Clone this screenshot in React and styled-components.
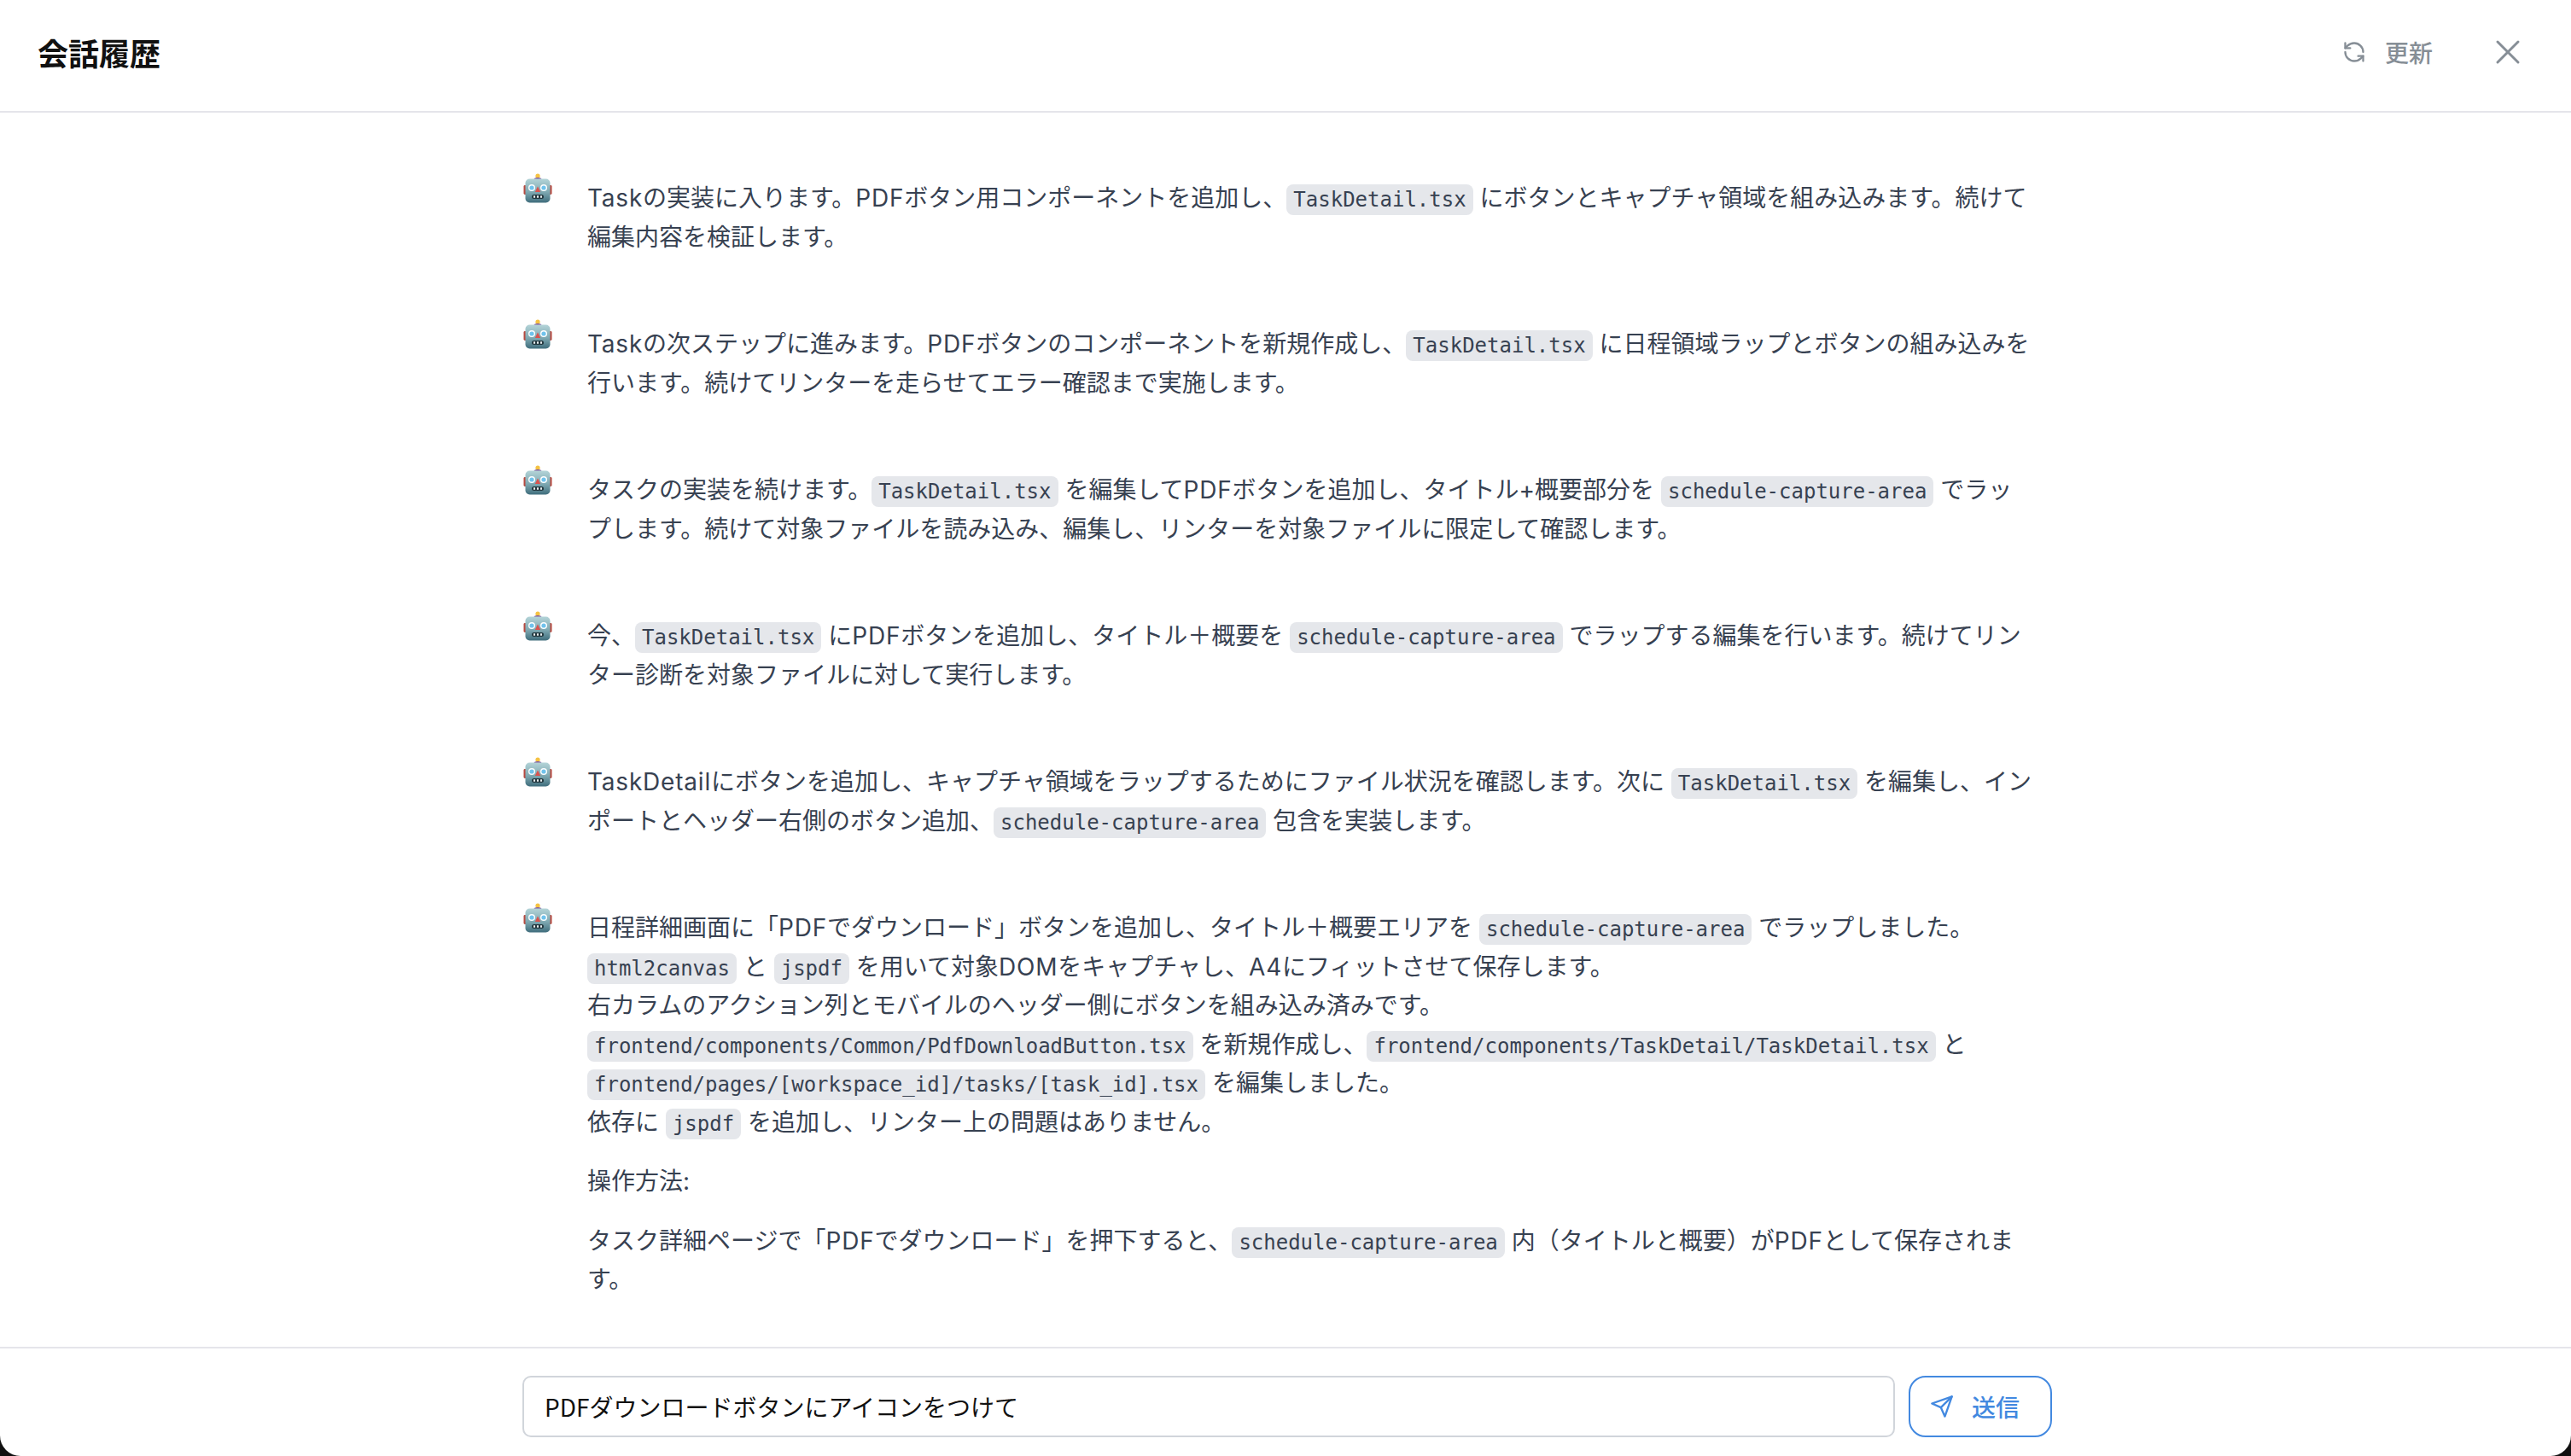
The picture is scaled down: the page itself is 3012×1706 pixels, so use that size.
import React from 'react';
import styled, { createGlobalStyle } from 'styled-components';
import { RefreshCcw, X } from 'lucide-react';
import { FiSend } from 'react-icons/fi';

const GlobalStyle = createGlobalStyle`
	* {
		box-sizing: border-box;
	}

	html,
	body {
		margin: 0;
		height: 100%;
		background: #101010;
	}

	#root {
		height: 100%;
	}
`;

const sans = `Inter, "Noto Sans CJK JP", sans-serif`;
const cjk = `"Noto Sans CJK JP", sans-serif`;

const Panel = styled.div`
	display: flex;
	flex-direction: column;
	height: 100%;
	overflow: hidden;
	background: #ffffff;
	border-radius: 0 0 24px 24px;
`;

const Header = styled.header`
	display: flex;
	align-items: center;
	justify-content: space-between;
	flex: none;
	height: 132px;
	padding: 0 50px 8px 44px;
	border-bottom: 2px solid #e5e5ea;
`;

const Title = styled.h1`
	margin: 0;
	font-family: ${cjk};
	font-size: 36px;
	font-weight: 700;
	color: #111111;
`;

const Actions = styled.div`
	display: flex;
	align-items: center;
	gap: 64px;
`;

const RefreshButton = styled.button`
	display: flex;
	align-items: center;
	gap: 22px;
	padding: 0;
	border: 0;
	background: none;
	font-family: ${cjk};
	font-size: 28px;
	font-weight: 500;
	color: #868e96;
`;

const CloseButton = styled.button`
	display: flex;
	padding: 0;
	border: 0;
	background: none;
	color: #868e96;
`;

const History = styled.main`
	flex: 1;
	min-height: 0;
	overflow: hidden;
	padding-left: 4px;
`;

const Column = styled.div`
	display: flex;
	flex-direction: column;
	gap: 73px;
	width: 1792px;
	margin: 0 auto;
	padding: 71px 24px 0 0;
`;

const Message = styled.div`
	display: flex;
	gap: 40px;
`;

const Avatar = styled.div`
	flex: none;
	width: 36px;
	height: 36px;
`;

const Body = styled.div`
	flex: 1;
	min-width: 0;
	padding-top: 7px;
	font-family: ${sans};
	font-size: 28px;
	line-height: 1.625;
	color: #374151;

	p {
		margin: 0 0 24px;
	}

	p:last-child {
		margin-bottom: 0;
	}
`;

const Latin = styled.span`
	letter-spacing: 0.8px;
`;

const Code = styled.code`
	padding: 4px 8px;
	border-radius: 8px;
	background: #e5e7eb;
	font-family: "DejaVu Sans Mono", monospace;
	font-size: 24px;
	line-height: 1;
`;

const Footer = styled.footer`
	flex: none;
	height: 128px;
	padding: 32px 0 0 4px;
	border-top: 2px solid #e5e5ea;
`;

const Composer = styled.div`
	display: flex;
	gap: 16px;
	width: 1792px;
	margin: 0 auto;
`;

const Input = styled.input`
	flex: 1;
	min-width: 0;
	height: 72px;
	padding: 0 24px;
	border: 2px solid #d1d5db;
	border-radius: 10px;
	outline: none;
	font-family: ${cjk};
	font-size: 28px;
	color: #111111;
`;

const SendButton = styled.button`
	display: flex;
	align-items: center;
	gap: 21px;
	flex: none;
	width: 168px;
	height: 72px;
	padding: 0 0 0 23px;
	border: 2px solid #4389e0;
	border-radius: 20px;
	background: #ffffff;
	font-family: ${cjk};
	font-size: 28px;
	font-weight: 500;
	color: #4389e0;
`;

const RobotIcon = () => (
	<svg width="36" height="36" viewBox="0 0 36 36">
		<defs>
			<linearGradient id="robotHead" x1="0" y1="0" x2="0" y2="1">
				<stop offset="0" stopColor="#b4d4d8" />
				<stop offset="0.55" stopColor="#7fa9b2" />
				<stop offset="1" stopColor="#3f6d7c" />
			</linearGradient>
		</defs>
		<circle cx="18" cy="3.2" r="2.6" fill="#f5c242" />
		<path d="M13.5 7.5c0-1.6 2-2.4 4.5-2.4s4.5.8 4.5 2.4z" fill="#7d5a9e" />
		<rect x="1.5" y="14" width="4" height="11" rx="1.4" fill="#b5483f" />
		<rect x="30.5" y="14" width="4" height="11" rx="1.4" fill="#b5483f" />
		<rect x="3.5" y="6.5" width="29" height="28" rx="5" fill="url(#robotHead)" />
		<circle cx="11" cy="17" r="4" fill="#ffffff" />
		<circle cx="11" cy="17" r="2.6" fill="#6fc2ec" />
		<circle cx="25" cy="17" r="4" fill="#ffffff" />
		<circle cx="25" cy="17" r="2.6" fill="#6fc2ec" />
		<path d="M18 15.5l3.2 6.5h-6.4z" fill="#d9534f" />
		<rect x="11" y="25" width="14" height="5" rx="2.5" fill="#24383f" />
		<path d="M14 26.2v2.6M18 26.2v2.6M22 26.2v2.6" stroke="#e8eef0" strokeWidth="2" />
	</svg>
);

const messages = [
	[
		<p key="0">
			<Latin>Task</Latin>の実装に入ります。<Latin>PDF</Latin>ボタン用コンポーネントを追加し、<Code>TaskDetail.tsx</Code> にボタンとキャプチャ領域を組み込みます。続けて編集内容を検証します。
		</p>,
	],
	[
		<p key="0">
			<Latin>Task</Latin>の次ステップに進みます。<Latin>PDF</Latin>ボタンのコンポーネントを新規作成し、<Code>TaskDetail.tsx</Code> に日程領域ラップとボタンの組み込みを行います。続けてリンターを走らせてエラー確認まで実施します。
		</p>,
	],
	[
		<p key="0">
			タスクの実装を続けます。<Code>TaskDetail.tsx</Code> を編集して<Latin>PDF</Latin>ボタンを追加し、タイトル+概要部分を <Code>schedule-capture-area</Code> でラップします。続けて対象ファイルを読み込み、編集し、リンターを対象ファイルに限定して確認します。
		</p>,
	],
	[
		<p key="0">
			今、<Code>TaskDetail.tsx</Code> に<Latin>PDF</Latin>ボタンを追加し、タイトル＋概要を <Code>schedule-capture-area</Code> でラップする編集を行います。続けてリンター診断を対象ファイルに対して実行します。
		</p>,
	],
	[
		<p key="0">
			<Latin>TaskDetail</Latin>にボタンを追加し、キャプチャ領域をラップするためにファイル状況を確認します。次に <Code>TaskDetail.tsx</Code> を編集し、インポートとヘッダー右側のボタン追加、<Code>schedule-capture-area</Code> 包含を実装します。
		</p>,
	],
	[
		<p key="0">
			日程詳細画面に「<Latin>PDF</Latin>でダウンロード」ボタンを追加し、タイトル＋概要エリアを <Code>schedule-capture-area</Code> でラップしました。
			<br />
			<Code>html2canvas</Code> と <Code>jspdf</Code> を用いて対象<Latin>DOM</Latin>をキャプチャし、<Latin>A4</Latin>にフィットさせて保存します。
			<br />
			右カラムのアクション列とモバイルのヘッダー側にボタンを組み込み済みです。
			<br />
			<Code>frontend/components/Common/PdfDownloadButton.tsx</Code> を新規作成し、<Code>frontend/components/TaskDetail/TaskDetail.tsx</Code> と <Code>frontend/pages/[workspace_id]/tasks/[task_id].tsx</Code> を編集しました。
			<br />
			依存に <Code>jspdf</Code> を追加し、リンター上の問題はありません。
		</p>,
		<p key="1">操作方法:</p>,
		<p key="2">
			タスク詳細ページで「<Latin>PDF</Latin>でダウンロード」を押下すると、<Code>schedule-capture-area</Code> 内（タイトルと概要）が<Latin>PDF</Latin>として保存されます。
		</p>,
	],
];

const App = () => (
	<>
		<GlobalStyle />
		<Panel>
			<Header>
				<Title>会話履歴</Title>
				<Actions>
					<RefreshButton>
						<RefreshCcw size={28} strokeWidth={2} />
						更新
					</RefreshButton>
					<CloseButton aria-label="閉じる">
						<X size={48} strokeWidth={1.5} />
					</CloseButton>
				</Actions>
			</Header>

			<History>
				<Column>
					{messages.map((paragraphs, i) => (
						<Message key={i}>
							<Avatar>
								<RobotIcon />
							</Avatar>
							<Body>{paragraphs}</Body>
						</Message>
					))}
				</Column>
			</History>

			<Footer>
				<Composer>
					<Input defaultValue="PDFダウンロードボタンにアイコンをつけて" />
					<SendButton>
						<FiSend size={28} />
						送信
					</SendButton>
				</Composer>
			</Footer>
		</Panel>
	</>
);

export default App;
